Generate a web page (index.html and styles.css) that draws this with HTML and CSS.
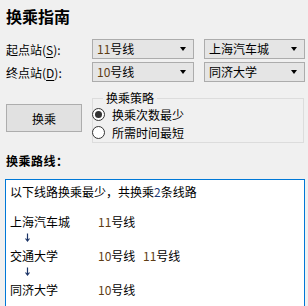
FILE: index.html
```html
<!DOCTYPE html>
<html lang="zh-CN">
  <head>
    <meta charset="UTF-8" />
    <title>换乘指南</title>
    <link rel="stylesheet" href="styles.css">
  </head>
  <body>
    <div class="app">
      <h1 class="title">换乘指南</h1>

      <div class="form-row">
        <label class="field-label">起点站(<u>S</u>):</label>
        <div class="combo combo-line"><span><span class="num">11</span>号线</span><i class="arrow"></i></div>
        <div class="combo combo-station"><span>上海汽车城</span><i class="arrow"></i></div>
      </div>
      <div class="form-row second">
        <label class="field-label">终点站(<u>D</u>):</label>
        <div class="combo combo-line"><span><span class="num">10</span>号线</span><i class="arrow"></i></div>
        <div class="combo combo-station"><span>同济大学</span><i class="arrow"></i></div>
      </div>

      <div class="action-row">
        <button class="btn">换乘</button>
        <fieldset class="strategy">
          <legend>换乘策略</legend>
          <div class="radio-item"><span class="radio checked"></span>换乘次数最少</div>
          <div class="radio-item"><span class="radio"></span>所需时间最短</div>
        </fieldset>
      </div>

      <h2 class="section-title">换乘路线：</h2>

      <div class="result">
        <div class="line">以下线路换乘最少，共换乘<span class="num2">2</span>条线路</div>
        <div class="line"></div>
        <div class="line"><span class="station">上海汽车城</span><span class="num">11</span>号线</div>
        <div class="line"><svg class="down" width="5" height="9" viewBox="0 0 5 9"><path d="M2.5 0.5V8M0.5 5.5L2.5 8L4.5 5.5" fill="none" stroke="#1a3366" stroke-width="1.2"/></svg></div>
        <div class="line"><span class="station">交通大学</span><span class="route"><span class="num">10</span>号线</span><span class="num">11</span>号线</div>
        <div class="line"><svg class="down" width="5" height="9" viewBox="0 0 5 9"><path d="M2.5 0.5V8M0.5 5.5L2.5 8L4.5 5.5" fill="none" stroke="#1a3366" stroke-width="1.2"/></svg></div>
        <div class="line"><span class="station">同济大学</span><span class="num">10</span>号线</div>
      </div>
    </div>
  </body>
</html>
```

FILE: styles.css
```css
* {
  margin: 0;
  padding: 0;
  box-sizing: border-box;
}

body {
  height: 100vh;
  overflow: hidden;
  background: #f0f0f0;
  color: #000;
  font-family: "Noto Sans CJK SC", "Noto Sans", sans-serif;
  font-size: 12px;
}

.app {
  padding: 6px 3px 0 5px;
}

.title {
  font-size: 16px;
  line-height: 20px;
  font-weight: bold;
  padding-left: 1px;
}

.form-row {
  display: flex;
  align-items: center;
  height: 20px;
  margin-top: 13px;
}

.form-row.second {
  margin-top: 3px;
}

.field-label {
  width: 87px;
  padding-left: 1px;
}

.field-label u {
  text-underline-offset: 2px;
}

.combo {
  height: 20px;
  display: flex;
  align-items: center;
  justify-content: space-between;
  background: #e5e5e5;
  border: 1px solid #acacac;
  padding: 0 7px 0 4px;
  line-height: 16px;
}

.combo-line {
  width: 102px;
  margin-right: 10px;
}

.combo-station {
  width: 101px;
}

.arrow {
  width: 0;
  height: 0;
  border-left: 3.5px solid transparent;
  border-right: 3.5px solid transparent;
  border-top: 4px solid #000;
}

.num {
  color: #5e3c14;
}

.num2 {
  color: #1f3d78;
}

.action-row {
  display: flex;
  align-items: flex-start;
  margin-top: 9px;
}

.btn {
  width: 76px;
  height: 28px;
  margin-top: 13px;
  margin-left: 1px;
  margin-right: 10px;
  background: #e1e1e1;
  border: 1px solid #adadad;
  font: inherit;
  color: #000;
}

.strategy {
  width: 212px;
  height: 52px;
  border: 1px solid #dcdcdc;
  padding: 0;
}

.strategy legend {
  margin-left: 10px;
  padding: 0 3px;
  line-height: 14px;
}

.radio-item {
  display: flex;
  align-items: center;
  height: 18px;
  gap: 7px;
  margin-left: -1px;
}

.radio {
  width: 13px;
  height: 13px;
  border: 1px solid #333;
  border-radius: 50%;
  background: #fff;
  display: flex;
  align-items: center;
  justify-content: center;
}

.radio.checked::after {
  content: "";
  width: 7px;
  height: 7px;
  border-radius: 50%;
  background: #333;
}

.section-title {
  font-size: 12px;
  font-weight: bold;
  line-height: 16px;
  letter-spacing: 0.5px;
  margin-top: 10px;
  padding-left: 1px;
}

.result {
  width: 300px;
  height: 140px;
  margin-top: 10px;
  background: #fff;
  border: 1px solid #0078d7;
  padding: 4px 4px;
}

.line {
  height: 15px;
  line-height: 15px;
  white-space: nowrap;
}

.station {
  display: inline-block;
  width: 88px;
}

.route {
  display: inline-block;
  width: 45px;
}

.down {
  display: block;
  margin: 4px 0 0 15px;
}
```
